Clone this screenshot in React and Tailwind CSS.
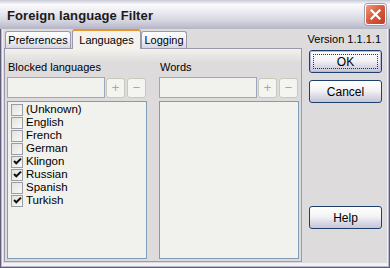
import React from 'react';

const languages = [
  { name: '(Unknown)', checked: false },
  { name: 'English', checked: false },
  { name: 'French', checked: false },
  { name: 'German', checked: false },
  { name: 'Klingon', checked: true },
  { name: 'Russian', checked: true },
  { name: 'Spanish', checked: false },
  { name: 'Turkish', checked: true },
];

const CheckBox = ({ checked }) => (
  <span className="w-[12px] h-[12px] border border-[#9c9ca4] bg-[linear-gradient(135deg,#e2e2de,#f8f8f6)] flex items-center justify-center shrink-0">
    {checked && (
      <svg width="9" height="9" viewBox="0 0 9 9">
        <polyline points="1,4 3.3,6.3 8,1.6" fill="none" stroke="#111" strokeWidth="2" />
      </svg>
    )}
  </span>
);

const SmallButton = ({ label }) => (
  <div className="w-[19px] h-[20px] rounded-[3px] border border-[#cac8bb] bg-[#f4f4f0] flex items-center justify-center text-[#aca899] text-[13px] leading-none">
    {label}
  </div>
);

const DialogButton = ({ label, isDefault }) => (
  <div className="w-[73px] h-[23px] rounded-[3px] border border-[#1d3f6e] bg-[linear-gradient(to_bottom,#ffffff_0%,#f3f3f6_45%,#dcdce8_70%,#c6c6d6_100%)] flex items-center justify-center text-[12px]">
    {isDefault ? (
      <div className="w-full h-full rounded-[2px] border border-[#b5b9e0] flex items-center justify-center p-[2px]">
        <div className="w-full h-full border border-dotted border-[#333] flex items-center justify-center">
          {label}
        </div>
      </div>
    ) : (
      label
    )}
  </div>
);

const ListColumn = ({ title, items }) => (
  <div className="w-[140px] flex flex-col">
    <div className="h-[13px] leading-[13px] pl-[1px]">{title}</div>
    <div className="mt-[3px] flex items-center h-[21px]">
      <div className="w-[98px] h-[21px] border border-[#9aa8bf] bg-[#f1f1ed]" />
      <div className="ml-[1px]">
        <SmallButton label="+" />
      </div>
      <div className="ml-[2px]">
        <SmallButton label="−" />
      </div>
    </div>
    <div className="mt-[3px] flex-1 border border-[#7f9db9] bg-[#f1f1ed] pt-[1px] pl-[3px]">
      {items &&
        items.map((lang) => (
          <div key={lang.name} className="h-[13px] flex items-center">
            <CheckBox checked={lang.checked} />
            <span className="ml-[3px] leading-[13px] text-[11.5px]">{lang.name}</span>
          </div>
        ))}
    </div>
  </div>
);

export default function App() {
  return (
    <div className="w-[390px] h-[268px] flex flex-col font-['Liberation_Sans',Arial,sans-serif] text-[11px] text-black bg-[#5f5d7a] overflow-hidden">
      {/* title bar */}
      <div className="h-[29px] shrink-0 flex items-center pl-[7px] pr-[4px] bg-[linear-gradient(to_bottom,#c9c9d6_0%,#fbfbfd_15%,#ececf1_40%,#d2d2de_75%,#b4b4c6_100%)]">
        <span className="text-[13px] font-bold text-[#1a1a1a] tracking-[0.1px] mt-[2px]">Foreign language Filter</span>
        <div className="ml-auto w-[21px] h-[21px] rounded-[3px] border border-white bg-[linear-gradient(135deg,#ef9a7c_0%,#d9583a_50%,#c13f26_100%)] flex items-center justify-center shadow-[0_0_0_1px_#a0a0b0]">
          <svg width="11" height="11" viewBox="0 0 11 11">
            <path d="M1.5 1.5 L9.5 9.5 M9.5 1.5 L1.5 9.5" stroke="#fff" strokeWidth="2.2" strokeLinecap="square" />
          </svg>
        </div>
      </div>

      {/* frame */}
      <div className="flex-1 flex flex-col px-[1px] pb-[1px] bg-[#5f5d7a]">
        <div className="flex-1 flex flex-col px-[1px] pb-[1px] bg-[#b9b8ca]">
          <div className="flex-1 flex flex-col px-[1px] pb-[3px] bg-[#f2f2f5]">
            <div className="flex-1 flex bg-[#dddbdc]">
              {/* tabs + panel */}
              <div className="ml-[1px] w-[298px] flex flex-col">
                <div className="h-[19px] flex items-end">
                  <div className="ml-[1px] w-[66px] h-[17px] rounded-t-[3px] border border-b-0 border-[#9a98ac] bg-[linear-gradient(to_bottom,#ffffff,#eeeef4_55%,#d6d6e2)] flex items-center justify-center pt-[1px]">
                    Preferences
                  </div>
                  <div className="ml-[1px] w-[69px] h-[20px] -mb-px relative z-10 rounded-t-[3px] border border-b-0 border-[#9a98ac] border-t-[#e6962e] border-t-2 bg-[#f3f2ec] flex items-center justify-center">
                    Languages
                  </div>
                  <div className="w-[46px] h-[17px] rounded-t-[3px] border border-b-0 border-[#9a98ac] bg-[linear-gradient(to_bottom,#ffffff,#eeeef4_55%,#d6d6e2)] flex items-center justify-center pt-[1px]">
                    Logging
                  </div>
                </div>
                <div className="flex-1 border border-[#9a98ac] bg-[linear-gradient(to_bottom,#f3f2ec_0px,#dddbdc_14px,#dddbdc_100%)] pt-[12px] pb-[2px] px-[2px] flex gap-[12px] mb-[1px]">
                  <ListColumn title="Blocked languages" items={languages} />
                  <ListColumn title="Words" />
                </div>
              </div>

              {/* right buttons */}
              <div className="ml-[7px] w-[73px] flex flex-col">
                <div className="mt-[4px] h-[13px] leading-[13px] flex justify-end whitespace-nowrap text-[11px] mr-[1px]">
                  <span>Version 1.1.1.1</span>
                </div>
                <div className="mt-[4px]">
                  <DialogButton label="OK" isDefault />
                </div>
                <div className="mt-[7px]">
                  <DialogButton label="Cancel" />
                </div>
                <div className="mt-[103px]">
                  <DialogButton label="Help" />
                </div>
              </div>
            </div>
          </div>
        </div>
      </div>
    </div>
  );
}
